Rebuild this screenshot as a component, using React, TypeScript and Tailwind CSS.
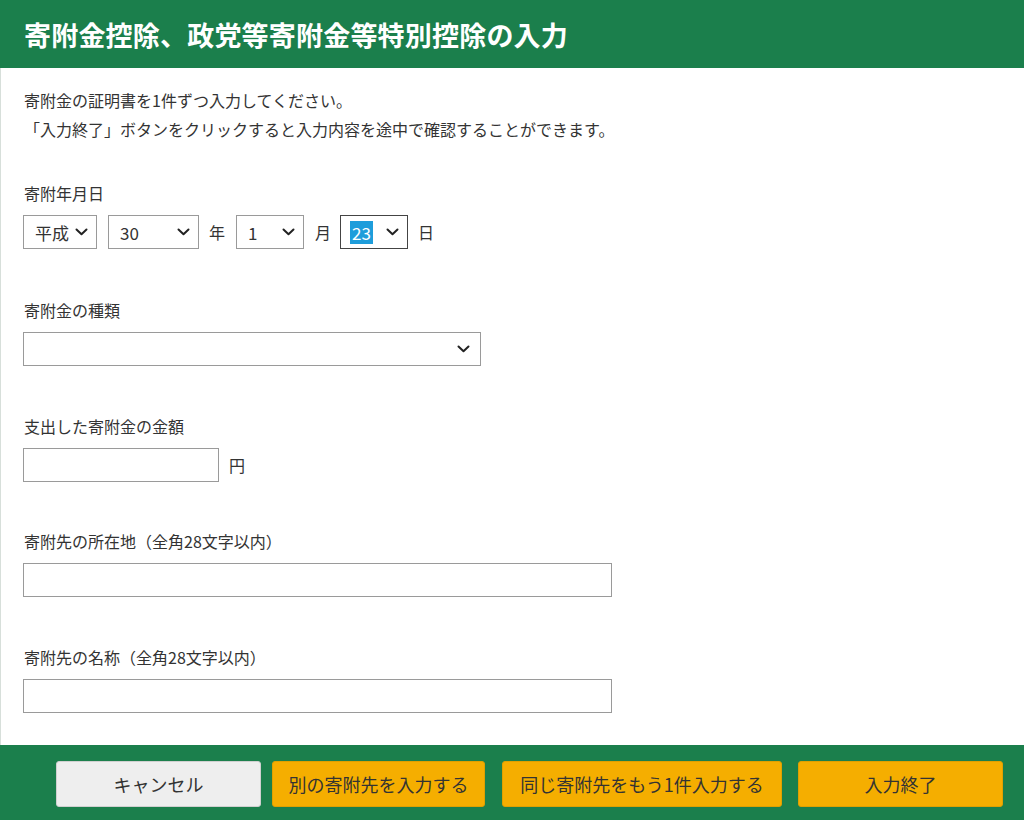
import React from 'react';

const FONT = "font-['Meiryo','Noto_Sans_CJK_JP','Noto_Sans',sans-serif]";

const Chevron: React.FC = () => (
  <svg width="13" height="8" viewBox="0 0 13 8" className="shrink-0">
    <path d="M1.5 1.5 L6.5 6.2 L11.5 1.5" fill="none" stroke="#222" strokeWidth="2" strokeLinecap="round" strokeLinejoin="round" />
  </svg>
);

const FakeSelect: React.FC<{ value?: string; w: string; focused?: boolean }> = ({ value, w, focused }) => (
  <div
    className={`${w} h-[34px] flex items-center justify-between pl-[11px] pr-[8px] bg-white border ${
      focused ? 'border-[#444]' : 'border-[#9a9a9a]'
    } text-[17px] text-[#333]`}
  >
    {focused ? (
      <span className="bg-[#1e9ddb] text-white px-[2px] leading-[23px] -ml-[2px]">{value}</span>
    ) : (
      <span className="leading-none">{value}</span>
    )}
    <Chevron />
  </div>
);

const Label: React.FC<{ children: React.ReactNode }> = ({ children }) => (
  <div className="text-[16px] leading-[24px] text-[#333] mb-[10px]">{children}</div>
);

const App: React.FC = () => {
  return (
    <div className={`${FONT} w-[1024px] h-[820px] flex flex-col bg-white overflow-hidden`}>
      {/* header */}
      <div className="h-[68px] shrink-0 bg-[#1b7f4c] flex items-center pl-[24px]">
        <h1 className="text-white font-bold text-[27px] leading-none tracking-[0.2px]">
          寄附金控除、政党等寄附金等特別控除の入力
        </h1>
      </div>

      {/* body */}
      <div className="flex-1 border-l border-[#d7dfda] pl-[22px] pt-[18px]">
        <div className="text-[16px] leading-[29px] text-[#333] pl-[1px]">
          <p>寄附金の証明書を1件ずつ入力してください。</p>
          <p>「入力終了」ボタンをクリックすると入力内容を途中で確認することができます。</p>
        </div>

        <div className="mt-[37px] pl-[1px]">
          <Label>寄附年月日</Label>
        </div>
        <div className="flex items-center text-[16px] text-[#333]">
          <FakeSelect value="平成" w="w-[74px]" />
          <div className="ml-[11px]">
            <FakeSelect value="30" w="w-[91px]" />
          </div>
          <span className="ml-[10px]">年</span>
          <div className="ml-[11px]">
            <FakeSelect value="1" w="w-[68px]" />
          </div>
          <span className="ml-[11px]">月</span>
          <div className="ml-[9px]">
            <FakeSelect value="23" w="w-[68px]" focused />
          </div>
          <span className="ml-[10px]">日</span>
        </div>

        <div className="mt-[49px] pl-[1px]">
          <Label>寄附金の種類</Label>
        </div>
        <div className="w-[458px] h-[34px] flex items-center justify-end pr-[10px] border border-[#9a9a9a] bg-white">
          <Chevron />
        </div>

        <div className="mt-[48px] pl-[1px]">
          <Label>支出した寄附金の金額</Label>
        </div>
        <div className="flex items-center">
          <input className="w-[196px] h-[34px] border border-[#9a9a9a] bg-white outline-none" />
          <span className="ml-[10px] text-[16px] text-[#333]">円</span>
        </div>

        <div className="mt-[47px] pl-[1px]">
          <Label>寄附先の所在地（全角28文字以内）</Label>
        </div>
        <input className="block w-[589px] h-[34px] border border-[#9a9a9a] bg-white outline-none" />

        <div className="mt-[48px] pl-[1px]">
          <Label>寄附先の名称（全角28文字以内）</Label>
        </div>
        <input className="block w-[589px] h-[34px] border border-[#9a9a9a] bg-white outline-none" />
      </div>

      {/* footer */}
      <div className="h-[75px] shrink-0 bg-[#1b7f4c] flex items-start pt-[16px] pl-[56px]">
        <button className="w-[205px] h-[46px] rounded-[3px] bg-[#eeeeee] border border-[#d0d0d0] text-[18px] text-[#333]">
          キャンセル
        </button>
        <button className="ml-[11px] w-[213px] h-[46px] rounded-[3px] bg-[#f5ae00] border border-[#e0a000] text-[18px] text-[#333]">
          別の寄附先を入力する
        </button>
        <button className="ml-[17px] w-[280px] h-[46px] rounded-[3px] bg-[#f5ae00] border border-[#e0a000] text-[18px] text-[#333]">
          同じ寄附先をもう1件入力する
        </button>
        <button className="ml-[16px] w-[205px] h-[46px] rounded-[3px] bg-[#f5ae00] border border-[#e0a000] text-[18px] text-[#333]">
          入力終了
        </button>
      </div>
    </div>
  );
};

export default App;
